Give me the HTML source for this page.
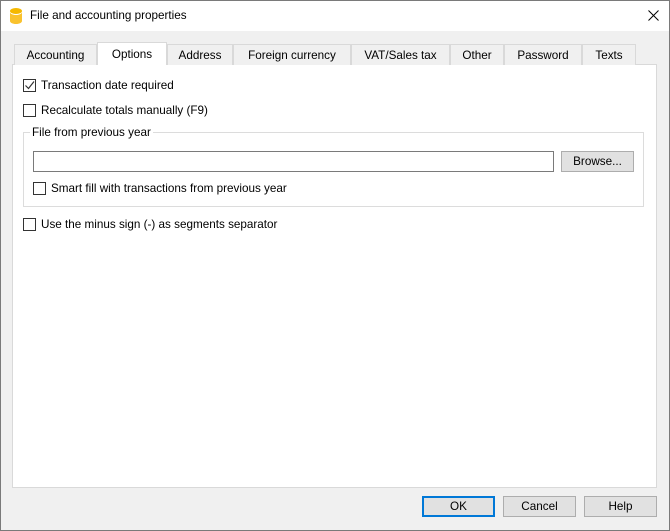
<!DOCTYPE html>
<html><head><style>
*{box-sizing:border-box}
body{margin:0;width:670px;height:531px;overflow:hidden;font:11.7px "Liberation Sans",sans-serif;color:#000;background:#f0f0f0;position:relative}
.a{position:absolute}
.win{left:0;top:0;width:670px;height:531px;border:1px solid #7a7a7a;}
.title{left:1px;top:1px;width:668px;height:30px;background:#fff}
.tab{position:absolute;top:44px;height:21px;border:1px solid #d9d9d9;border-bottom:none;background:#f0f0f0;text-align:center;line-height:21px}
.tab.sel{top:42px;height:23px;background:#fff;z-index:2;line-height:24px}
.pane{left:12px;top:64px;width:645px;height:424px;background:#fff;border:1px solid #d9d9d9}
.cb{position:absolute;width:13px;height:13px;border:1px solid #333;background:#fff}
.lbl{position:absolute;white-space:nowrap}
.btn{position:absolute;height:21px;border:1px solid #adadad;background:#e1e1e1;text-align:center;line-height:20px}
</style></head><body>
<div class="a win"></div>
<div class="a title"></div>
<svg class="a" style="left:9px;top:7px" width="14" height="17" viewBox="0 0 14 17"><ellipse cx="7" cy="4" rx="6" ry="3" fill="#f5b800"/><path d="M1 5v9c0 1.7 2.7 3 6 3s6-1.3 6-3V5c0 1.7-2.7 3-6 3S1 6.7 1 5z" fill="#f9c22e"/></svg>
<div class="lbl" style="left:30px;top:9px">File and accounting properties</div>
<svg class="a" style="left:648px;top:10px" width="11" height="11"><path d="M0.5 0.5L10.5 10.5M10.5 0.5L0.5 10.5" stroke="#000" stroke-width="1"/></svg>
<div class="a pane"></div>
<div class="tab" style="left:14px;width:83px">Accounting</div>
<div class="tab sel" style="left:97px;width:70px">Options</div>
<div class="tab" style="left:167px;width:66px">Address</div>
<div class="tab" style="left:233px;width:118px">Foreign currency</div>
<div class="tab" style="left:351px;width:99px">VAT/Sales tax</div>
<div class="tab" style="left:450px;width:54px">Other</div>
<div class="tab" style="left:504px;width:78px">Password</div>
<div class="tab" style="left:582px;width:54px">Texts</div>

<div class="cb" style="left:23px;top:79px"></div>
<svg class="a" style="left:24px;top:80px" width="11" height="11"><path d="M1.5 5.5l3 3 5.5-7" stroke="#333" fill="none" stroke-width="1.2"/></svg>
<div class="lbl" style="left:41px;top:79px">Transaction date required</div>
<div class="cb" style="left:23px;top:104px"></div>
<div class="lbl" style="left:41px;top:104px">Recalculate totals manually (F9)</div>

<div class="a" style="left:23px;top:132px;width:621px;height:75px;border:1px solid #dcdcdc"></div>
<div class="lbl" style="left:30px;top:126px;background:#fff;padding:0 2px">File from previous year</div>
<div class="a" style="left:33px;top:151px;width:521px;height:21px;border:1px solid #7a7a7a;background:#fff"></div>
<div class="btn" style="left:561px;top:151px;width:73px">Browse...</div>
<div class="cb" style="left:33px;top:182px"></div>
<div class="lbl" style="left:51px;top:182px">Smart fill with transactions from previous year</div>

<div class="cb" style="left:23px;top:218px"></div>
<div class="lbl" style="left:41px;top:218px">Use the minus sign (-) as segments separator</div>

<div class="btn" style="left:422px;top:496px;width:73px;border:2px solid #0078d7;line-height:18px">OK</div>
<div class="btn" style="left:503px;top:496px;width:73px">Cancel</div>
<div class="btn" style="left:584px;top:496px;width:73px">Help</div>
</body></html>
